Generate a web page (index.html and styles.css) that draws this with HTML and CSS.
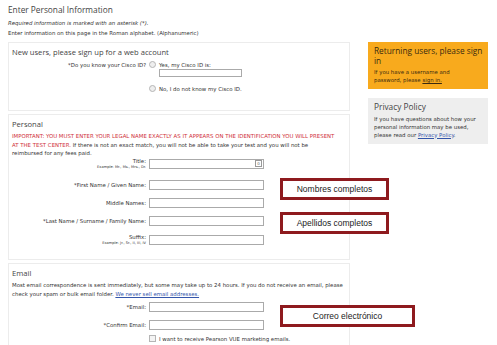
FILE: index.html
```html
<!DOCTYPE html>
<html lang="en">
<head>
  <meta charset="UTF-8">
  <title>Enter Personal Information</title>
  <link rel="stylesheet" href="styles.css">
</head>
<body>
  <div class="page">
    <div class="intro">
      <h1>Enter Personal Information</h1>
      <p class="req">Required information is marked with an asterisk (*).</p>
      <p>Enter information on this page in the Roman alphabet. (Alphanumeric)</p>
    </div>

    <div class="layout">
      <div class="main">
        <section class="box box-account">
          <h2>New users, please sign up for a web account</h2>
          <div class="row">
            <label>*Do you know your Cisco ID?</label>
            <div class="choices">
              <div class="choice"><span class="radio"></span>Yes, my Cisco ID is:</div>
              <input class="field field-id" type="text">
              <div class="choice choice-no"><span class="radio"></span>No, I do not know my Cisco ID.</div>
            </div>
          </div>
        </section>

        <section class="box box-personal">
          <h2>Personal</h2>
          <p class="note"><span class="warn">IMPORTANT: YOU MUST ENTER YOUR LEGAL NAME EXACTLY AS IT APPEARS ON THE IDENTIFICATION YOU WILL PRESENT AT THE TEST CENTER.</span> If there is not an exact match, you will not be able to take your test and you will not be reimbursed for any fees paid.</p>
          <div class="rows">
            <div class="row row-title">
              <label>Title:<small>Example: Mr., Ms., Mrs., Dr.</small></label>
              <div class="field field-select"><span class="pick">0</span></div>
            </div>
            <div class="row"><label>*First Name / Given Name:</label><input class="field" type="text"></div>
            <div class="row"><label>Middle Names:</label><input class="field" type="text"></div>
            <div class="row"><label>*Last Name / Surname / Family Name:</label><input class="field" type="text"></div>
            <div class="row"><label>Suffix:<small>Example: Jr., Sr., II, III, IV</small></label><input class="field" type="text"></div>
          </div>
          <div class="tag tag-first">Nombres completos</div>
          <div class="tag tag-last">Apellidos completos</div>
        </section>

        <section class="box box-email">
          <h2>Email</h2>
          <p class="note">Most email correspondence is sent immediately, but some may take up to 24 hours. If you do not receive an email, please check your spam or bulk email folder. <a href="#">We never sell email addresses.</a></p>
          <div class="rows">
            <div class="row"><label>*Email:</label><input class="field" type="text"></div>
            <div class="row"><label>*Confirm Email:</label><input class="field" type="text"></div>
            <div class="row row-check"><span></span><div class="choice"><span class="check"></span>I want to receive Pearson VUE marketing emails.</div></div>
          </div>
          <div class="tag tag-email">Correo electrónico</div>
        </section>
      </div>

      <aside class="side">
        <div class="panel panel-login">
          <h3>Returning users, please sign in</h3>
          <p>If you have a username and password, please <a href="#">sign in.</a></p>
        </div>
        <div class="panel panel-privacy">
          <h3>Privacy Policy</h3>
          <p>If you have questions about how your personal information may be used, please read our <a href="#">Privacy Policy</a>.</p>
        </div>
      </aside>
    </div>
  </div>
</body>
</html>
```

FILE: styles.css
```css
body {
  margin: 0;
  background: #fff;
  color: #333;
  font-family: "DejaVu Sans", Verdana, sans-serif;
  font-size: 5.4px;
  overflow: hidden;
}

.page {
  padding: 3px 0 0 8px;
}

h1, h2, h3 {
  font-family: "Open Sans", "Segoe UI", sans-serif;
  font-weight: normal;
  color: #444;
  margin: 0;
}

h1 {
  font-size: 8.3px;
  line-height: 13px;
}

.intro p {
  margin: 0;
  line-height: 10px;
}

.intro .req {
  font-style: italic;
  margin-top: 2px;
}

.layout {
  display: flex;
  gap: 18px;
  margin-top: 4px;
}

.main {
  width: 342px;
  display: flex;
  flex-direction: column;
  gap: 3px;
}

.box {
  position: relative;
  border: 1px solid #ececec;
  padding: 5px 3px 0 3px;
}

.box h2 {
  font-size: 7.6px;
  line-height: 9px;
}

.box-account {
  height: 62px;
}

.box-personal {
  height: 139px;
}

.box-email {
  height: 100px;
}

.note {
  margin: 3px 0 0 0;
  line-height: 8.7px;
}

.box-personal .note {
  padding-right: 6px;
}

.warn {
  color: #d0303a;
}

a {
  color: #3355aa;
}

.rows {
  display: flex;
  flex-direction: column;
  gap: 8px;
  margin-top: 1px;
}

.row {
  display: grid;
  grid-template-columns: 134px auto;
  column-gap: 3px;
  align-items: center;
}

.row label {
  text-align: right;
  display: flex;
  flex-direction: column;
  align-items: flex-end;
}

.row small {
  font-size: 3.6px;
  margin-top: 1px;
}

.field {
  box-sizing: border-box;
  width: 115px;
  height: 10px;
  border: 1px solid #aaa;
  background: #fff;
  margin: 0;
  padding: 0;
}

.field-select {
  display: flex;
  justify-content: flex-end;
  align-items: center;
  padding-right: 1px;
}

.pick {
  box-sizing: border-box;
  width: 7px;
  height: 7px;
  border: 1px solid #999;
  font-size: 4px;
  line-height: 5px;
  text-align: center;
  color: #666;
}

.row-title {
  margin-bottom: 3px;
}

.box-account .row {
  margin-top: 4px;
  align-items: start;
}

.box-account .row label {
  padding-top: 1px;
}

.choices {
  display: flex;
  flex-direction: column;
}

.choice {
  display: flex;
  align-items: center;
  gap: 3px;
}

.choice-no {
  margin-top: 8px;
}

.field-id {
  width: 83px;
  height: 8px;
  margin: 1px 0 0 10px;
}

.radio {
  width: 5px;
  height: 5px;
  border-radius: 50%;
  border: 1px solid #b5b5b5;
  background: #eee;
}

.check {
  width: 5px;
  height: 5px;
  border: 1px solid #b5b5b5;
  background: #f4f4f4;
}

.box-personal .rows {
  margin-top: 0;
}

.box-email .rows {
  margin-top: 4px;
}

.box-email .row-check {
  margin-top: -3px;
}

.tag {
  position: absolute;
  left: 271px;
  box-sizing: border-box;
  height: 22px;
  border: 3px solid #8e1a1e;
  background: #fff;
  font-family: "Liberation Sans", Arial, sans-serif;
  font-size: 8.5px;
  color: #222;
  display: flex;
  align-items: center;
  justify-content: center;
}

.tag-first {
  top: 63px;
  width: 109px;
}

.tag-last {
  top: 97px;
  width: 109px;
}

.tag-email {
  top: 41px;
  width: 135px;
}

.side {
  width: 120px;
  display: flex;
  flex-direction: column;
  gap: 9px;
}

.panel {
  padding: 4px 5px 5px 6px;
}

.panel h3 {
  font-size: 8.3px;
  line-height: 9.5px;
}

.panel p {
  margin: 3px 0 0 0;
  line-height: 8px;
}

.panel-login {
  background: #f8aa1d;
  color: #3a2a10;
}

.panel-login p {
  max-width: 88px;
}

.panel-login h3 {
  color: #3a2a10;
}

.panel-login a {
  color: #3a2a10;
}

.panel-privacy {
  background: #eeeeee;
}
```
